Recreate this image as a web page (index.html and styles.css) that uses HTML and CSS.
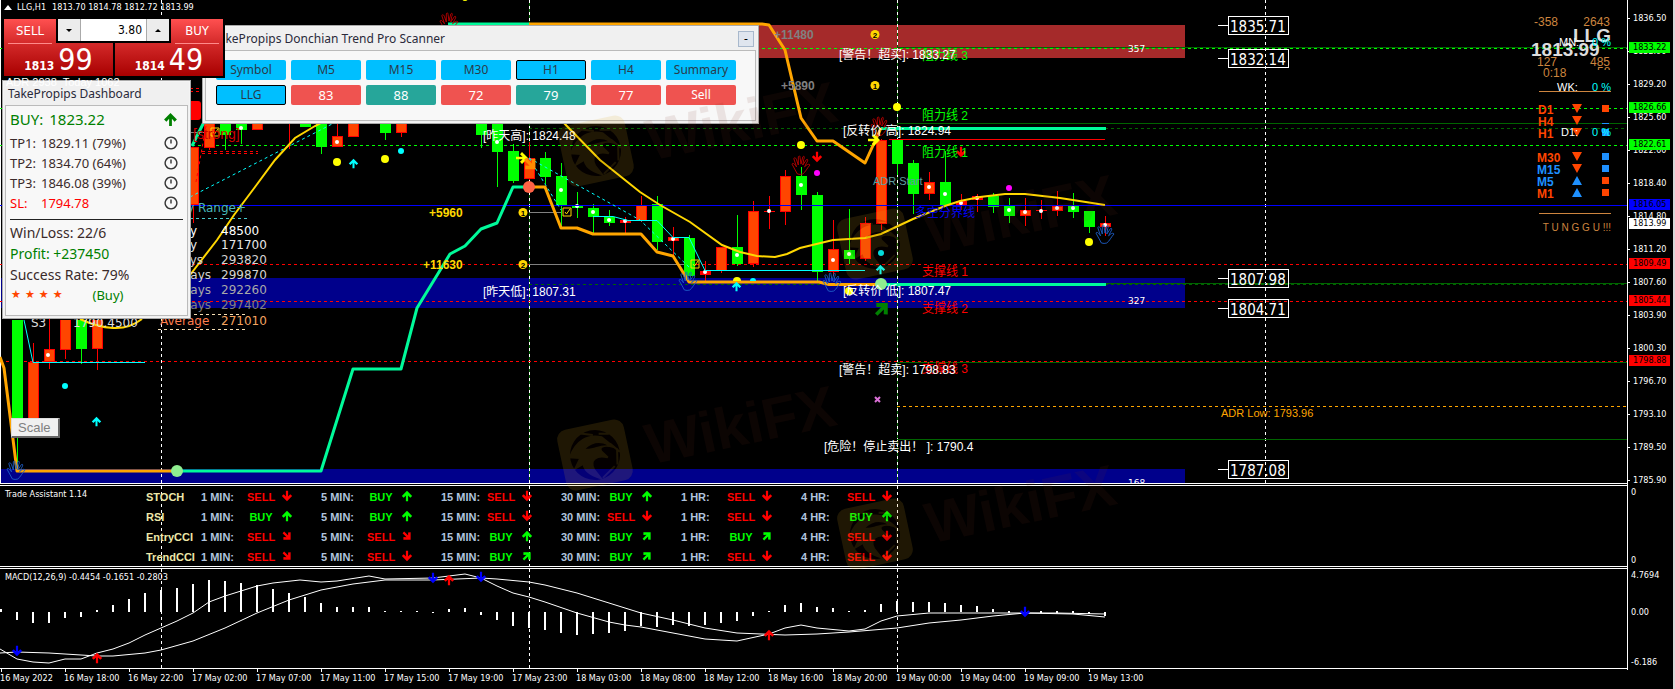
FILE: index.html
```
<!DOCTYPE html>
<html lang="en">
<head>
<meta charset="utf-8">
<title>LLG,H1</title>
<link rel="stylesheet" href="styles.css">
</head>
<body>
<svg class="defs" aria-hidden="true">
  <symbol id="arrow" viewBox="-7 -7 14 14" overflow="visible"><path d="M0-6 6 0 3.800 2 1.300-.6V6H-1.300V-.6L-3.800 2-6 0Z"/></symbol>
  <symbol id="hand" viewBox="0 0 20 22" overflow="visible"><path d="M6 21C4 17 2 14 0 10 1 8 3 10 5 13L2 4C3 2 4 3 5 5L7 11V2C8 0 9 1 9 3L10 10 12 2C14 0 14 3 13 5L12 11 16 5C18 4 18 6 16 9L14 13C16 11 19 9 20 11 17 14 15 19 12 21Q9 22 6 21Z" fill="none" stroke="currentColor"/></symbol>
  <symbol id="tick-box" viewBox="0 0 10 10" overflow="visible"><path d="M1 1H9V9H1ZM3 5 4.500 7 8 2" fill="none" stroke="gold"/></symbol>
  <symbol id="clock" viewBox="0 0 12 12"><path d="M6 1a5 5 0 1 0 .01 0ZM6 3V6.500" fill="none" stroke="#333" stroke-width="1.200"/></symbol>
  <symbol id="mark" viewBox="-120 -60 340 120" overflow="visible">
    <g transform="rotate(-12)">
      <g opacity=".14">
        <rect x="-34" y="-31" width="68" height="62" rx="10" fill="#d9a620"/>
        <circle r="25" fill="#200"/>
        <path d="M-25-3C-16-18-2-22 10-16L20-4C10-9 5-7 7-2L12 5C2 0-7 3-4 14L1 24C-10 18-14 12-13 6L-22 9-15 0ZM-10-24 2-20M18-18 8-20M25 2 17-8M20 14 23-2M3 24 17 15" fill="#d9a620" stroke="#d9a620" stroke-width="2"/>
        <path d="M-8-8C0-13 8-12 14-7 6-9 0-6-8-8Z" fill="#200"/>
      </g>
      <text x="52" y="21" class="mark-text">WikiFX</text>
    </g>
  </symbol>
</svg>

<main class="terminal">
  <section class="pane chart">
    <svg class="plot" role="img" aria-label="LLG hourly candles">
      <g class="crisp">
        <rect x="700" y="25" width="485" height="33" fill="#a52a2a"/>
        <rect x="0" y="278" width="1185" height="30" fill="#00008b"/>
        <rect x="0" y="469" width="1185" height="14" fill="#00008b"/>
        <g class="session">
          <path class="under" d="M529.500 0V483M897.500 0V483"/>
          <path d="M.5 0V483" class="edge"/>
          <path d="M161.500 0V483M529.500 0V483M897.500 0V483M1265.500 0V483"/>
        </g>
        <g stroke="#006400">
          <line x1="897" x2="100%" y1="47.500" y2="47.500"/><line x1="897" x2="100%" y1="123.500" y2="123.500"/>
          <line x1="897" x2="100%" y1="283.500" y2="283.500"/><line x1="897" x2="100%" y1="362.500" y2="362.500"/>
          <line x1="897" x2="100%" y1="439.500" y2="439.500"/>
          <line class="dash" x1="529" x2="100%" y1="128.500" y2="128.500"/><line class="dash" x1="529" x2="100%" y1="284.500" y2="284.500"/>
        </g>
        <g class="dash" stroke="#0f0">
          <line x2="100%" y1="48.500" y2="48.500"/><line x2="100%" y1="108.500" y2="108.500"/><line x2="100%" y1="145.500" y2="145.500"/>
        </g>
        <g class="dash" stroke="#f00">
          <line x2="100%" y1="264.500" y2="264.500"/><line x2="100%" y1="301.500" y2="301.500"/><line x2="100%" y1="361.500" y2="361.500"/>
          <path d="M190 88.500H202M190 91.500H202M190 151.500H258M190 153.500H258"/>
        </g>
        <line class="dash" stroke="orange" x1="897" x2="100%" y1="406.500" y2="406.500"/>
        <path class="dash" stroke="#48c8c8" d="M190 218.500H247"/>
        <path stroke="gray" d="M190 132.500H209M529 212.500H562M529 264.500H690"/>
      </g>

      <g class="crisp candles">
        <path class="up wick" d="M17.500 320V470M81.500 320V364M225.500 120V150M241.500 120V144M321.500 120V154M385.500 120V140M481.500 120V148M497.500 120V187M513.500 144V183M545.500 152V184M561.500 163V229M577.500 192V218M593.500 204V234M609.500 210V226M657.500 196V250M689.500 235V276M737.500 215V266M801.500 167V210M817.500 192V281M849.500 209V264M897.500 140V175M913.500 160V214M945.500 151V206M993.500 193V213M1009.500 198V223M1073.500 193V218M1089.500 211V233"/>
        <path class="down wick" d="M33.500 343V418M49.500 319V369M65.500 320V359M97.500 320V370M193.500 147V223M209.500 120V150M289.500 120V149M337.500 120V147M401.500 120V137M529.500 142V180M625.500 217V233M641.500 196V222M673.500 227V256M705.500 261V282M721.500 247V273M753.500 201V267M769.500 196V229M785.500 170V225M833.500 220V276M865.500 217V261M881.500 139V230M929.500 172V200M961.500 194V210M977.500 194V212M1025.500 198V226M1041.500 200V219M1057.500 191V216M1105.500 216V236"/>
        <path class="up body" d="M17.500 320V419M81.500 320V349M225.500 120V135M241.500 120V130M305.500 120V127M321.500 120V147M385.500 120V133M481.500 120V135M497.500 120V152M513.500 151V181M545.500 158V177M561.500 176V205M577.500 205V208M593.500 208V217M609.500 217V223M657.500 204V242M689.500 238V276M737.500 247V264M801.500 176V195M817.500 195V272M849.500 250V259M897.500 140V164M913.500 163V194M945.500 182V205M993.500 196V207M1009.500 206V216M1073.500 206V212M1089.500 211V227"/>
        <path class="down body" d="M33.500 362V419M49.500 349V362M65.500 320V350M97.500 320V349M193.500 147V205M209.500 120V148M257.500 120V130M337.500 136V147M353.500 120V137M401.500 120V133M529.500 158V179M625.500 220V223M641.500 205V221M673.500 237V241M705.500 271V275M721.500 247V271M753.500 211V264M769.500 211V212M785.500 176V212M833.500 249V272M865.500 223V259M881.500 140V224M929.500 182V194M961.500 201V205M977.500 196V200M1025.500 210V216M1041.500 210V211M1057.500 206V211M1105.500 223V227"/>
        <path class="down core" d="M33.500 363V419M49.500 350V361M65.500 320V349M97.500 320V348M193.500 148V204M209.500 120V147M257.500 120V129M337.500 137V146M353.500 120V136M401.500 120V132M529.500 159V178M641.500 206V220M673.500 238V240M721.500 248V270M753.500 212V263M785.500 177V211M833.500 250V271M865.500 224V258M881.500 141V223M929.500 183V193M1025.500 211V215M1057.500 207V210M1105.500 224V226"/>
      </g>
      <path class="dots" d="M48 355h.01M241 128h.01M337 142h.01M497 142h.01M561 190h.01M577 206h.01M593 212h.01M609 220h.01M625 221h.01M673 239h.01M705 272h.01M737 255h.01M769 211h.01M801 185h.01M833 260h.01M849 254h.01M929 187h.01M945 194h.01M961 203h.01M977 198h.01M1009 210h.01M1025 212h.01M1041 211h.01M1057 208h.01M1073 208h.01M1105 225h.01"/>

      <g class="trace">
        <path stroke="#00f" d="M0 205.500H4000"/>
        <path stroke="#f00" d="M889 139.500H1105"/>
        <path stroke="aqua" d="M24 320 33 362.500H145M593 216.500H613L628 220.500H657L673 237.500H689L705 270.500H865"/>
        <path stroke="aqua" class="dash" d="M190 197 336 122M529 158 561 210M529 158 640 220 690 268"/>
        <path stroke="#f00" class="dash" d="M196 182 206 126"/>
        <path class="ma" d="M190 275 217 240 234 215 255 187 275 160 295 138 315 126 330 118M80 319Q97 327 113 328T142 319M560 119 600 160 640 192 660 205 690 222 722 245 740 252 757 256 775 257 787 254 800 248 833 240 865 238 881 234 913 219 945 206 960 201 980 197 1005 194 1025 194 1060 198 1105 205"/>
        <path class="band rise" d="M177 471H321L353 369H401L417 308 450 254 465 246 481 229 497 223 513 187H529M448 24H529M192 146 204 122M881 128.500H1106M881 284.500H1106"/>
        <path class="band fall" d="M0 357 4 368 17 471H177M529 187H545L561 228H577L593 234H641L657 252 673 256 689 282H819L829 284.500H881M529 24H762L769 25 785 50 801 118 817 141H833L865 163 881 128"/>
      </g>

      <g fill="#ff0">
        <circle cx="337" cy="162" r="4"/><circle cx="385" cy="159" r="4"/><circle cx="897" cy="107" r="4"/><circle cx="801" cy="145" r="4"/>
        <circle cx="1089" cy="242" r="4"/><path d="M733 281a4 4 0 0 1 8 0Z"/><circle cx="849" cy="291" r="4"/><circle cx="465" cy="-2" r="3"/>
        <use href="#arrow" x="515" y="151" width="14" height="14" transform="rotate(90 522 158)"/>
        <use href="#arrow" x="867" y="133" width="14" height="14" transform="rotate(90 874 140)"/>
      </g>
      <g fill="aqua">
        <circle cx="65" cy="386" r="3"/><circle cx="401" cy="151" r="3"/><circle cx="881" cy="253" r="3"/><path d="M750 281a3 3 0 0 1 6 0Z"/>
        <use href="#arrow" x="348" y="158" width="11" height="11"/><use href="#arrow" x="91" y="416" width="11" height="11"/>
        <use href="#arrow" x="731" y="281" width="11" height="11"/><use href="#arrow" x="875" y="264" width="11" height="11"/>
      </g>
      <circle cx="817" cy="173" r="3" fill="#f0f"/><circle cx="1009" cy="188" r="3" fill="#f0f"/>
      <g fill="#f00">
        <use href="#arrow" x="811" y="151" width="12" height="12" transform="rotate(180 817 157)"/>
        <use href="#arrow" x="955" y="146" width="12" height="12" transform="rotate(180 961 152)"/>
      </g>
      <use href="#arrow" x="523" y="156" width="17" height="17" transform="rotate(135 531 164)" fill="darkorange"/>
      <use href="#arrow" x="873" y="299" width="19" height="19" transform="rotate(45 882 308)" fill="green"/>
      <circle cx="177" cy="471" r="6" fill="lightgreen"/><circle cx="881" cy="284" r="6" fill="lightgreen"/><circle cx="529" cy="187" r="6" fill="tomato"/>
      <g class="warn"><use href="#hand" x="440" y="12" width="18" height="20"/><use href="#hand" x="792" y="155" width="18" height="20"/><use href="#hand" x="871" y="116" width="18" height="20"/></g>
      <g class="calm"><use href="#hand" x="7" y="460" width="18" height="20"/><use href="#hand" x="679" y="271" width="18" height="20"/><use href="#hand" x="823" y="272" width="18" height="20"/><use href="#hand" x="1096" y="224" width="18" height="20"/></g>
      <use href="#tick-box" x="210" y="127" width="10" height="10"/><use href="#tick-box" x="562" y="207" width="10" height="10"/><use href="#tick-box" x="690" y="259" width="10" height="10"/>
      <g fill="gold"><circle cx="523" cy="212.500" r="4.500"/><circle cx="523" cy="264.500" r="4.500"/><circle cx="875" cy="34.500" r="4.500"/><circle cx="875" cy="85.500" r="4.500"/></g>
      <g class="badge"><text x="523" y="216">1</text><text x="523" y="268">2</text><text x="875" y="38">2</text><text x="875" y="89">1</text></g>
      <path d="M875 397 880 402M880 397 875 402" stroke="orchid" stroke-width="2"/>

      <g class="gain"><text x="429" y="217">+5960</text><text x="423" y="269">+11630</text></g>
      <g class="gain idle"><text x="774" y="39">+11480</text><text x="781" y="90">+5890</text></g>
      <g class="note">
        <g fill="#0f0"><text x="922" y="60">阻力线 3</text><text x="922" y="120">阻力线 2</text><text x="922" y="157">阻力线 1</text></g>
        <g fill="#f00"><text x="922" y="276">支撑线 1</text><text x="922" y="313">支撑线 2</text><text x="922" y="373">支撑线 3</text></g>
        <text x="915" y="217" fill="#00f">多空分界线</text>
        <g fill="#fff">
          <text x="483" y="140">[昨天高]: 1824.48</text><text x="483" y="296">[昨天低]: 1807.31</text>
          <text x="839" y="59">[警告！超买]: 1833.27</text><text x="843" y="135">[反转价 高]: 1824.94</text>
          <text x="843" y="295">[反转价 低]: 1807.47</text><text x="839" y="374">[警告！超卖]: 1798.83</text>
          <text x="824" y="451">[危险！停止卖出！ ]: 1790.4</text>
        </g>
      </g>
      <g class="small"><text x="873" y="185" fill="cadetblue">ADR Start</text><text x="1221" y="417" fill="orange">ADR Low: 1793.96</text></g>
      <g class="zone"><text x="1128" y="52">357</text><text x="1128" y="304">327</text><text x="1128" y="486">168</text></g>
      <g class="level">
        <path d="M1218 25.500H1228M1218 58.500H1228M1218 278.500H1228M1218 308.500H1228M1218 469.500H1228M1228.500 16.500h60v18h-60ZM1228.500 49.500h60v18h-60ZM1228.500 269.500h60v18h-60ZM1228.500 299.500h60v18h-60ZM1228.500 460.500h60v18h-60Z"/>
        <text x="1230" y="32">1835.71</text><text x="1230" y="65">1832.14</text><text x="1230" y="285">1807.98</text><text x="1230" y="315">1804.71</text><text x="1230" y="476">1787.08</text>
      </g>

      <rect x="185" y="101" width="16" height="19" rx="3" fill="#f00"/>
      <text x="193" y="139" class="strong">[strong]</text>
      <g class="range">
        <text x="246" y="212" text-anchor="end" fill="#48b8b8">Daily Range+</text>
        <g text-anchor="end">
          <text x="197" y="235" fill="#fff">Today</text><text x="197" y="249" fill="#e8e8e8">1 Day</text><text x="203" y="264" fill="#d3d3d3">5 Days</text>
          <text x="211" y="279" fill="#d3d3d3">10 Days</text><text x="211" y="294" fill="#a9a9a9">20 Days</text><text x="211" y="309" fill="#808080">50 Days</text>
        </g>
        <text x="221" y="235" fill="#fff">48500</text><text x="221" y="249" fill="#e8e8e8">171700</text><text x="221" y="264" fill="#d3d3d3">293820</text>
        <text x="221" y="279" fill="#d3d3d3">299870</text><text x="221" y="294" fill="#a9a9a9">292260</text><text x="221" y="309" fill="#808080">297402</text>
        <text x="160" y="325" fill="coral">Average</text><text x="221" y="325" fill="sandybrown">271010</text>
        <path class="dash" stroke="wheat" d="M158 314.500H247M158 329.500H247"/>
        <text x="31" y="327" fill="#ddd">S3</text><text x="73" y="327" fill="#ddd">1790.4500</text>
      </g>

      <svg x="100%" class="over"><g transform="translate(-1627 0)">
        <g class="stat">
          <text x="1534" y="26">-358</text><text x="1610" y="26" text-anchor="end">2643</text>
          <text x="1537" y="66">127</text><text x="1610" y="66" text-anchor="end">485</text><text x="1543" y="77">0:18</text>
          <path d="M1539 91.500H1611M1539 213.500H1611"/>
        </g>
        <svg x="1596" y="67" width="16" height="3"><text x="1" y="9" class="stat">58</text></svg>
        <g class="quote"><text x="1573" y="42">LLG</text><text x="1531" y="56">1813.99</text></g>
        <g class="frame">
          <text x="1538" y="114" class="bear">D1</text><text x="1538" y="126" class="bear">H4</text><text x="1538" y="138" class="bear">H1</text><text x="1537" y="162" class="bear">M30</text>
          <text x="1537" y="174" class="bull">M15</text><text x="1537" y="186" class="bull">M5</text><text x="1537" y="198" class="bear">M1</text>
          <path class="bear" d="M1572 104h10l-5 9ZM1572 116h10l-5 9ZM1572 128h10l-5 9ZM1572 152h10l-5 9ZM1572 164h10l-5 9ZM1602 105h7v7h-7ZM1602 177h7v7h-7ZM1602 189h7v7h-7Z"/>
          <path class="bull" d="M1572 185h10l-5-9ZM1572 197h10l-5-9ZM1602 123h7v1h-7ZM1602 129h7v7h-7ZM1602 153h7v7h-7ZM1602 165h7v7h-7Z"/>
        </g>
        <g class="small" fill="#fff"><text x="1559" y="46">MN:</text><text x="1557" y="91">WK:</text><text x="1561" y="136">D1:</text></g>
        <g class="small" fill="aqua" text-anchor="end"><text x="1611" y="46">0 %</text><text x="1611" y="91">0 %</text><text x="1611" y="136">0 %</text></g>
        <text x="1611" y="231" class="wait">T U N G G U !!!</text>
      </g></svg>
    </svg>

    <header class="caption"><svg width="8" height="5" viewBox="0 0 8 5"><path d="M0 5 4 0 8 5Z" fill="#fff"/></svg><span>LLG,H1</span><span>1813.70 1814.78 1812.72 1813.99</span></header>

    <section class="scanner">
      <header><h2>TakePropips Donchian Trend Pro Scanner</h2><button type="button" aria-label="Minimize">-</button></header>
      <div class="cells">
        <button type="button">Symbol</button><button type="button">M5</button><button type="button">M15</button><button type="button">M30</button><button type="button" class="on">H1</button><button type="button">H4</button><button type="button">Summary</button>
        <button type="button" class="on">LLG</button><button type="button" class="sell score">83</button><button type="button" class="buy score">88</button><button type="button" class="sell score">72</button><button type="button" class="buy score">79</button><button type="button" class="sell score">77</button><button type="button" class="sell">Sell</button>
      </div>
    </section>

    <section class="dashboard">
      <h2>TakePropips Dashboard</h2>
      <div class="card">
        <p class="signal"><span>BUY:</span><span>1823.22</span><svg width="15" height="15"><use href="#arrow" fill="green"/></svg></p>
        <p class="target"><span>TP1:</span><span>1829.11 (79%)</span><svg width="14" height="14"><use href="#clock"/></svg></p>
        <p class="target"><span>TP2:</span><span>1834.70 (64%)</span><svg width="14" height="14"><use href="#clock"/></svg></p>
        <p class="target"><span>TP3:</span><span>1846.08 (39%)</span><svg width="14" height="14"><use href="#clock"/></svg></p>
        <p class="target stop"><span>SL:</span><span>1794.78</span><svg width="14" height="14"><use href="#clock"/></svg></p>
        <hr>
        <p class="record">Win/Loss: 22/6</p>
        <p class="profit">Profit: +237450</p>
        <p class="rate">Success Rate: 79%</p>
        <p class="verdict"><span class="stars"><i>★</i><i>★</i><i>★</i><i>★</i></span><span>(Buy)</span></p>
      </div>
    </section>
    <span class="adr">ADR 2938&nbsp; Today 1062</span>

    <form class="trade">
      <button type="button"><b>SELL</b><span><small>1813</small>99</span></button>
      <button type="button"><b>BUY</b><span><small>1814</small>49</span></button>
      <div class="volume">
        <button type="button" aria-label="Decrease volume"><svg width="6" height="3"><path d="M0 0H6L3 3Z"/></svg></button>
        <input type="text" value="3.80" aria-label="Volume">
        <button type="button" aria-label="Increase volume"><svg width="6" height="3"><path d="M0 3H6L3 0Z"/></svg></button>
      </div>
    </form>
    <button type="button" class="scale">Scale</button>
  </section>

  <aside class="axis price">
    <ol><li>1836.50</li><li>1832.90</li><li>1829.20</li><li>1825.60</li><li>1822.00</li><li>1818.40</li><li>1814.80</li><li>1811.20</li><li>1807.60</li><li>1803.90</li><li>1800.30</li><li>1796.70</li><li>1793.10</li><li>1789.50</li><li>1785.90</li></ol>
    <span class="tag high t1">1833.22</span><span class="tag high t2">1826.66</span><span class="tag high t3">1822.61</span><span class="tag pivot">1816.05</span><span class="tag last">1813.99</span>
    <span class="tag low t4">1809.49</span><span class="tag low t5">1805.44</span><span class="tag low t6">1798.88</span>
  </aside>

  <section class="pane assistant">
    <svg class="back"><g class="session crisp"><path d="M161.500 0V80M529.500 0V80M897.500 0V80"/></g></svg>
    <span class="pane-title">Trade Assistant 1.14</span>
    <table>
      <tr><th>STOCH</th><td>1 MIN:</td><td class="s">SELL</td><td class="s d"><svg><use href="#arrow"/></svg></td><td>5 MIN:</td><td class="b">BUY</td><td class="b"><svg><use href="#arrow"/></svg></td><td>15 MIN:</td><td class="s">SELL</td><td class="s d"><svg><use href="#arrow"/></svg></td><td>30 MIN:</td><td class="b">BUY</td><td class="b"><svg><use href="#arrow"/></svg></td><td>1 HR:</td><td class="s">SELL</td><td class="s d"><svg><use href="#arrow"/></svg></td><td>4 HR:</td><td class="s">SELL</td><td class="s d"><svg><use href="#arrow"/></svg></td></tr>
      <tr><th>RSI</th><td>1 MIN:</td><td class="b">BUY</td><td class="b"><svg><use href="#arrow"/></svg></td><td>5 MIN:</td><td class="b">BUY</td><td class="b"><svg><use href="#arrow"/></svg></td><td>15 MIN:</td><td class="s">SELL</td><td class="s d"><svg><use href="#arrow"/></svg></td><td>30 MIN:</td><td class="s">SELL</td><td class="s d"><svg><use href="#arrow"/></svg></td><td>1 HR:</td><td class="s">SELL</td><td class="s d"><svg><use href="#arrow"/></svg></td><td>4 HR:</td><td class="b">BUY</td><td class="b"><svg><use href="#arrow"/></svg></td></tr>
      <tr><th>EntryCCI</th><td>1 MIN:</td><td class="s">SELL</td><td class="s dr"><svg><use href="#arrow"/></svg></td><td>5 MIN:</td><td class="s">SELL</td><td class="s dr"><svg><use href="#arrow"/></svg></td><td>15 MIN:</td><td class="b">BUY</td><td class="b"><svg><use href="#arrow"/></svg></td><td>30 MIN:</td><td class="b">BUY</td><td class="b ur"><svg><use href="#arrow"/></svg></td><td>1 HR:</td><td class="b">BUY</td><td class="b ur"><svg><use href="#arrow"/></svg></td><td>4 HR:</td><td class="s">SELL</td><td class="s d"><svg><use href="#arrow"/></svg></td></tr>
      <tr><th>TrendCCI</th><td>1 MIN:</td><td class="s">SELL</td><td class="s dr"><svg><use href="#arrow"/></svg></td><td>5 MIN:</td><td class="s">SELL</td><td class="s d"><svg><use href="#arrow"/></svg></td><td>15 MIN:</td><td class="b">BUY</td><td class="b ur"><svg><use href="#arrow"/></svg></td><td>30 MIN:</td><td class="b">BUY</td><td class="b ur"><svg><use href="#arrow"/></svg></td><td>1 HR:</td><td class="s">SELL</td><td class="s d"><svg><use href="#arrow"/></svg></td><td>4 HR:</td><td class="s">SELL</td><td class="s d"><svg><use href="#arrow"/></svg></td></tr>
    </table>
  </section>
  <aside class="axis ends"><span>0</span><span>0</span></aside>

  <section class="pane macd">
    <svg class="plot" role="img" aria-label="MACD"><g transform="translate(0 -569)">
      <g class="session crisp"><path d="M161.500 569V668M529.500 569V668M897.500 569V668"/></g>
      <path class="bars crisp" d="M1 609V612M17 612V620M33 612V623M49 612V623M65 612V618M81 612V617M97 610V612M113 605V612M129 599V612M145 593V612M161 590V612M177 588V612M193 584V612M209 580V612M225 581V612M241 583V612M257 585V612M273 589V612M289 593V612M305 597V612M321 603V612M337 607V612M353 607V612M369 607V612M385 611V612M401 611V612M417 611V612M433 612V613M449 609V612M465 608V612M481 612V615M497 612V620M513 612V626M529 612V628M545 612V630M561 612V633M577 612V635M593 612V634M609 612V633M625 612V631M641 612V626M657 612V627M673 612V625M689 612V626M705 612V625M721 612V623M737 612V621M753 612V616M769 611V612M785 605V612M801 603V612M817 607V612M833 608V612M849 611V612M865 610V612M881 604V612M897 601V612M913 602V612M929 602V612M945 603V612M961 605V612M977 606V612M993 609V612M1009 611V613M1025 612V614M1041 611V613M1057 611V613M1073 611V613M1089 612V614M1105 612V616"/>
      <path class="curve" d="M0 649 17 659 33 662 49 663 65 659 81 659 97 653 113 649 129 643 145 635 161 628 177 621 193 613 209 602 225 596 241 591 257 586 273 583 300 580 321 582 337 581 369 576 385 579 433 578 449 576 465 574 481 578 497 586 513 593 529 597 545 602 577 613 609 622 625 625 641 627 673 633 705 639 737 641 769 634 785 628 801 625 817 628 849 631 865 629 881 621 897 616 929 613H1057L1105 614"/>
      <path class="curve" d="M0 653 17 652 49 653 97 656H113L145 653 161 650 193 641 225 628 257 613 289 600 321 590 353 584 385 580 433 580 481 578 497 579 529 582 545 585 577 593 609 603 641 613 673 620 705 628 737 633 785 635 817 634 849 632 897 628 929 623 961 620 993 616 1025 613 1073 614 1105 617"/>
      <g fill="#f00"><use href="#arrow" x="91" y="652" width="12" height="12"/><use href="#arrow" x="443" y="574" width="12" height="12"/><use href="#arrow" x="763" y="629" width="12" height="12"/></g>
      <g fill="#00f"><use href="#arrow" x="11" y="645" width="12" height="12" transform="rotate(180 17 651)"/><use href="#arrow" x="427" y="572" width="12" height="12" transform="rotate(180 433 578)"/><use href="#arrow" x="475" y="571" width="12" height="12" transform="rotate(180 481 577)"/><use href="#arrow" x="1019" y="606" width="12" height="12" transform="rotate(180 1025 612)"/></g>
    </g></svg>
    <span class="pane-title float">MACD(12,26,9) -0.4454 -0.1651 -0.2803</span>
  </section>
  <aside class="axis ends macd-scale"><span>4.7694</span><span>0.00</span><span>-6.186</span></aside>

  <ol class="times"><li>16 May 2022</li><li>16 May 18:00</li><li>16 May 22:00</li><li>17 May 02:00</li><li>17 May 07:00</li><li>17 May 11:00</li><li>17 May 15:00</li><li>17 May 19:00</li><li>17 May 23:00</li><li>18 May 03:00</li><li>18 May 08:00</li><li>18 May 12:00</li><li>18 May 16:00</li><li>18 May 20:00</li><li>19 May 00:00</li><li>19 May 04:00</li><li>19 May 09:00</li><li>19 May 13:00</li></ol>

  <svg class="watermarks" aria-hidden="true">
    <use href="#mark" x="476" y="91" width="340" height="120"/><use href="#mark" x="475" y="395" width="340" height="120"/>
    <use href="#mark" x="755" y="184" width="340" height="120"/><use href="#mark" x="755" y="474" width="340" height="120"/>
  </svg>
</main>
</body>
</html>
```
FILE: styles.css
```
* { box-sizing: border-box; }
body {
  margin: 0;
  min-height: 100vh;
  background: #000;
  color: #fff;
  font: 9px/14px "DejaVu Sans Condensed", "Noto Sans", sans-serif;
}
h2, p, ol { margin: 0; padding: 0; font-weight: normal; list-style: none; }
button, input { font: inherit; margin: 0; padding: 0; border: 0; }
.defs { position: absolute; width: 0; height: 0; }

.terminal {
  position: relative;
  display: grid;
  grid-template-columns: minmax(0, 1fr) 48px;
  row-gap: 1px;
  overflow: hidden;
}
.pane { position: relative; border: 1px solid #fff; border-width: 1px 0; }
.chart { border-top: 0; }
.plot { display: block; width: 100%; overflow: hidden; }
.chart .plot { height: 483px; }
.macd .plot { height: 99px; }
.over { overflow: visible; }

/* plot drawing */
.crisp { shape-rendering: crispEdges; }
.dash { stroke-dasharray: 3 3; fill: none; }
.session path { stroke: #fff; stroke-dasharray: 3 3; }
.session .under { stroke: #006400; stroke-dasharray: none; }
.session .edge { stroke-dasharray: none; }
.wick { stroke-width: 1; }
.body { stroke-width: 11; }
.core { stroke-width: 9; }
.up { stroke: #0f0; }
.down { stroke: #f00; }
.down.core { stroke: #ff4500; }
.dots { stroke: #fff; stroke-width: 4; stroke-linecap: round; }
.trace path { fill: none; }
.ma { stroke: gold; stroke-width: 2; }
.band { stroke-width: 3; stroke-linejoin: round; }
.rise { stroke: #00fa9a; }
.fall { stroke: orange; }
.warn { color: #c00000; }
.calm { color: #1e5fc8; }
.bars { stroke: #fff; stroke-width: 2; }
.curve { fill: none; stroke: #fff; }

/* plot lettering */
.badge { font: bold 8px "Liberation Sans", sans-serif; text-anchor: middle; fill: #000; }
.gain { font: bold 12px "Liberation Sans", sans-serif; fill: gold; }
.idle { fill: gray; }
.note { font: 12px "Liberation Sans", "Noto Sans CJK SC", sans-serif; }
.small { font: 11px "Liberation Sans", sans-serif; }
.zone { font: 9px "DejaVu Sans", sans-serif; fill: #fff; }
.level { font-size: 15px; fill: #fff; }
.level path { fill: none; stroke: #fff; shape-rendering: crispEdges; }
.strong { font: 14px "Liberation Sans", sans-serif; fill: #d00000; }
.range { font: 12px "DejaVu Sans", sans-serif; }
.stat { font: 12px "Liberation Sans", sans-serif; fill: peru; }
.stat path { stroke: peru; }
.quote { font: bold 19px "Liberation Sans", sans-serif; fill: #ddd; }
.frame { font: bold 12px "Liberation Sans", sans-serif; }
.bear { fill: #ff4500; }
.bull { fill: #1e90ff; }
.wait { font: 10px "Liberation Sans", sans-serif; fill: peru; text-anchor: end; }

.caption { position: absolute; top: 0; left: 4px; display: flex; align-items: center; gap: 6px; }
.caption svg { margin-right: -1px; }

/* one-click trading */
.trade {
  position: absolute;
  top: 17px;
  left: 2px;
  display: grid;
  grid-template-columns: 109px 108px;
  gap: 2px;
  padding: 2px;
  background: #000;
}
.trade > button {
  display: flex;
  flex-direction: column;
  height: 57px;
  padding: 0 4px;
  color: #fff;
  background: linear-gradient(#ff5050, #d42a2a 42%, #a80000);
}
.trade b { width: 44px; border-bottom: 1px solid #ff8a8a; font: 13px/24px "DejaVu Sans Condensed", "Noto Sans", sans-serif; }
.trade > button:nth-child(2) b { align-self: flex-end; }
.trade > button span { display: flex; align-items: baseline; align-self: center; gap: 4px; font-size: 30px; line-height: 32px; }
.trade small { font-size: 12px; font-weight: bold; }
.volume { position: absolute; top: 0; left: 54px; display: flex; width: 115px; height: 26px; padding: 2px; background: #000; }
.volume button { flex: none; display: grid; place-items: center; width: 22px; background: #ececec; }
.volume input { width: 100%; min-width: 0; padding-right: 4px; border: solid #aaa; border-width: 0 1px; text-align: right; font-size: 12px; background: #fff; color: #000; }

/* floating windows */
.scanner, .dashboard {
  position: absolute;
  padding: 2px;
  border: 1px solid #aaa;
  outline: 1px solid #f4f4f4;
  outline-offset: -2px;
  background: #f0f0f0;
  color: #2a2a3a;
  font: 12px/20px "Noto Sans", sans-serif;
}
.scanner h2, .dashboard h2 { font-size: 12px; line-height: 22px; padding-left: 4px; }
.scanner { top: 25px; left: 202px; width: 557px; }
.scanner header { display: flex; justify-content: space-between; align-items: center; padding: 0 2px 0 4px; }
.scanner header button { width: 16px; height: 16px; border: 1px solid #a8b8cc; background: #dfe5ee; line-height: 12px; }
.cells {
  display: grid;
  grid-template-columns: repeat(7, 70px);
  gap: 5px;
  padding: 9px 10px 15px;
  border: 1px solid #bbb;
  background: #f8f8f8;
}
.cells button { height: 20px; border-radius: 2px; background: #00bfff; color: #2a3a4a; line-height: 18px; }
.cells .on { border: 1px solid #000; }
.cells .sell { background: #ef5350; color: #fff; }
.cells .buy { background: #26a69a; color: #fff; }
.cells .score { font-size: 13px; }
.dashboard { top: 80px; left: 2px; width: 189px; color: #3a2a2a; font-size: 13px; }
.dashboard h2 { padding-left: 3px; color: #2a2a3a; }
.card { padding: 1px 4px 10px; border: 1px solid #bbb; background: #f8f8f8; }
.card p { display: flex; align-items: center; }
.card svg { margin: 0 5px 0 auto; }
.card .signal { gap: 6px; margin-bottom: 2px; color: green; font-size: 15px; line-height: 24px; }
.target span:first-child { width: 31px; }
.stop { color: #f00; }
.card hr { margin: 6px 0 3px; border: 0; border-top: 1px solid #222; }
.record { font-size: 14px; }
.profit { color: green; font-size: 14px; line-height: 22px; }
.rate { font-size: 14px; }
.verdict { gap: 30px; color: green; }
.stars { display: flex; gap: 4px; padding-left: 1px; color: #ff4500; font: 11px/20px "DejaVu Sans", sans-serif; }
.stars i { font-style: normal; }
.adr { position: absolute; top: 76px; left: 6px; font: 11px/12px "Liberation Sans", sans-serif; }
.scale {
  position: absolute;
  top: 418px;
  left: 11px;
  padding: 0 7px 0 6px;
  border: solid;
  border-width: 1px 2px 2px 1px;
  border-color: #ddd #666 #666 #ddd;
  background: #f0f0f0;
  color: #808080;
  font: 13px/17px "Liberation Sans", sans-serif;
}

/* scales */
.axis { position: relative; border-left: 1px solid #fff; border-right: 2px solid #d8d8d8; margin-bottom: -1px; }
.price ol { padding-top: 2px; height: 483px; overflow: hidden; }
.price li { height: 33px; padding-left: 5px; line-height: 33px; background: linear-gradient(#fff, #fff) 0 16px / 2px 1px no-repeat; }
.price { overflow: hidden; }
.tag { position: absolute; left: 1px; width: 41px; padding-left: 4px; line-height: 11px; color: #000; }
.high { background: #0f0; }
.pivot { top: 199px; background: #00f; }
.last { top: 218px; background: #fff; }
.low { background: #f00; }
.t1 { top: 42px; }
.t2 { top: 102px; }
.t3 { top: 139px; }
.t4 { top: 258px; }
.t5 { top: 295px; }
.t6 { top: 355px; }
.ends { display: flex; flex-direction: column; justify-content: space-between; padding: 0 0 1px 3px; }
.macd-scale span:nth-child(2) { margin-bottom: 14px; }

.assistant { display: flex; align-items: flex-start; font: bold 11px/18px "Liberation Sans", sans-serif; }
.back { position: absolute; width: 100%; height: 100%; }
.pane-title { width: 142px; padding-left: 5px; font: 9px/16px "DejaVu Sans Condensed", "Noto Sans", sans-serif; }
.float { position: absolute; top: 0; left: 0; width: auto; }
.assistant table { position: relative; margin-left: 4px; table-layout: fixed; width: 774px; border-collapse: collapse; white-space: nowrap; }
.assistant th { width: 55px; padding: 2px 0 0; text-align: left; color: #eee8aa; }
.assistant td { padding: 2px 0 0; height: 20px; color: #b0c4de; }
.assistant td:nth-child(3n + 2) { width: 46px; }
.assistant td:nth-child(3n) { width: 28px; text-align: center; }
.assistant td:nth-child(3n + 4) { width: 46px; padding: 0 0 0 6px; }
.assistant td svg { display: block; width: 12px; height: 12px; fill: currentColor; }
.assistant .s { color: #f00; }
.assistant .b { color: #0f0; }
.d svg { transform: rotate(180deg); }
.dr svg { transform: rotate(135deg); }
.ur svg { transform: rotate(45deg); }

.times { grid-column: 1 / -1; display: grid; grid-template-columns: repeat(18, 64px); margin-top: -1px; border-right: 2px solid #d8d8d8; white-space: nowrap; line-height: 18px; height: 21px; }
.times li { background: linear-gradient(#fff, #fff) 1px 0 / 1px 3px no-repeat; }
.watermarks { position: absolute; inset: 0; width: 100%; height: 100%; pointer-events: none; }
.mark-text { font: bold 58px "Liberation Sans", sans-serif; fill: #7a3020; opacity: .1; }
```
